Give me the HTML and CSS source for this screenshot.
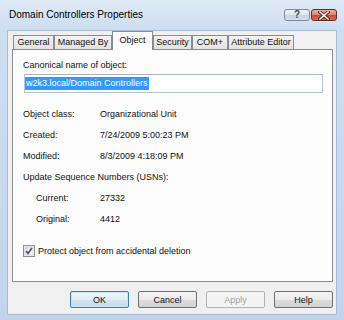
FILE: index.html
```html
<!DOCTYPE html>
<html lang="en">
<head>
  <meta charset="UTF-8">
  <title>Domain Controllers Properties</title>
  <link rel="stylesheet" href="styles.css">
</head>
<body>
  <div class="window">
    <div class="titlebar">
      <span class="title">Domain Controllers Properties</span>
      <div class="caption-btns">
        <span class="cbtn help">?</span>
        <span class="cbtn close">
          <svg width="12" height="9" viewBox="0 0 12 9">
            <path d="M2 1 L10 8 M10 1 L2 8" stroke="#4a1a10" stroke-width="3.2" stroke-linecap="square"/>
            <path d="M2 1 L10 8 M10 1 L2 8" stroke="#fff" stroke-width="1.6" stroke-linecap="square"/>
          </svg>
        </span>
      </div>
    </div>

    <div class="dialog">
      <div class="tabs">
        <div class="tab" style="width:41px">General</div>
        <div class="tab" style="width:58px">Managed By</div>
        <div class="tab selected" style="width:41px">Object</div>
        <div class="tab" style="width:39px">Security</div>
        <div class="tab" style="width:36px">COM+</div>
        <div class="tab" style="width:66px">Attribute Editor</div>
      </div>

      <div class="panel">
        <div class="label">Canonical name of object:</div>
        <div class="textbox"><span class="sel">w2k3.local/Domain Controllers</span></div>

        <div class="rows">
          <div class="row"><span class="key">Object class:</span><span>Organizational Unit</span></div>
          <div class="row"><span class="key">Created:</span><span>7/24/2009 5:00:23 PM</span></div>
          <div class="row"><span class="key">Modified:</span><span>8/3/2009 4:18:09 PM</span></div>
          <div class="row">Update Sequence Numbers (USNs):</div>
          <div class="row sub"><span class="key">Current:</span><span>27332</span></div>
          <div class="row sub"><span class="key">Original:</span><span>4412</span></div>
        </div>

        <div class="check">
          <svg width="12" height="12" viewBox="0 0 12 12">
            <defs>
              <linearGradient id="cb" x1="0" y1="0" x2="1" y2="1">
                <stop offset="0" stop-color="#d6dde8"/>
                <stop offset="1" stop-color="#fbfbfb"/>
              </linearGradient>
            </defs>
            <rect x="0.5" y="0.5" width="11" height="11" fill="#f4f4f4" stroke="#8e8f8f"/>
            <rect x="2" y="2" width="8" height="8" fill="url(#cb)" stroke="#c5c8ce" stroke-width="0.6"/>
            <path d="M3 6 L5 8.5 L9 3" fill="none" stroke="#3e5583" stroke-width="1.6"/>
          </svg>
          <span>Protect object from accidental deletion</span>
        </div>
      </div>

      <div class="buttons">
        <span class="btn default">OK</span>
        <span class="btn">Cancel</span>
        <span class="btn disabled">Apply</span>
        <span class="btn">Help</span>
      </div>
    </div>
  </div>
</body>
</html>
```

FILE: styles.css
```css
html, body {
  margin: 0;
  padding: 0;
}
body {
  font-family: "Liberation Sans", Arial, sans-serif;
  font-size: 9px;
  color: #111;
}
.window {
  width: 344px;
  height: 320px;
  box-sizing: border-box;
  padding: 0 7px 5px 7px;
  background: linear-gradient(to bottom, #dfe9f6 0px, #cddef1 30px, #c0d4ec 100%);
  display: flex;
  flex-direction: column;
}
.titlebar {
  height: 30px;
  display: flex;
  justify-content: space-between;
  align-items: flex-start;
}
.title {
  font-size: 10px;
  line-height: 12px;
  margin: 9px 0 0 2px;
  color: #000;
}
.caption-btns {
  display: flex;
  gap: 1px;
  margin-top: 9px;
}
.cbtn {
  width: 26px;
  height: 12px;
  box-sizing: border-box;
  border: 1px solid #7a889c;
  border-radius: 3px;
  display: flex;
  align-items: center;
  justify-content: center;
}
.help {
  background: linear-gradient(to bottom, #eef3fa 0%, #d9e3ef 50%, #c4d3e6 51%, #d3e0ef 100%);
  color: #3a4452;
  font-size: 10px;
  font-weight: bold;
  line-height: 10px;
}
.close {
  border-color: #6a2a22;
  background: linear-gradient(to bottom, #eaafa1 0%, #d9826e 50%, #c54a32 51%, #d66e54 100%);
}
.dialog {
  flex: 1;
  background: #f0f0f0;
  border: 1px solid #a8bcd5;
  display: flex;
  flex-direction: column;
  padding: 0 3px 0 4px;
}
.tabs {
  display: flex;
  align-items: flex-end;
  height: 19px;
  margin: 0 0 -1px 1px;
}
.tab {
  box-sizing: border-box;
  height: 14px;
  margin-bottom: 1px;
  border: 1px solid #898c95;
  border-bottom: none;
  background: linear-gradient(to bottom, #f3f3f3, #e3e3e3);
  text-align: center;
  line-height: 13px;
  white-space: nowrap;
}
.tab.selected {
  height: 19px;
  margin-bottom: 0;
  background: #fcfcfc;
  line-height: 14px;
  padding-top: 1px;
  position: relative;
  z-index: 1;
}
.panel {
  height: 233px;
  box-sizing: border-box;
  border: 1px solid #898c95;
  background: #fcfcfc;
  padding: 0 9px 0 10px;
}
.label {
  line-height: 14px;
  margin-top: 8px;
}
.textbox {
  margin: 2px 0 0 1px;
  height: 19px;
  box-sizing: border-box;
  border: 1px solid #b6c4d6;
  border-top-color: #a5b3c5;
  background: #fff;
  display: flex;
  align-items: center;
}
.sel {
  background: #3399ff;
  color: #fff;
  line-height: 13px;
  padding: 0 1px 0 1px;
}
.rows {
  margin-top: 11px;
}
.row {
  height: 21px;
  line-height: 21px;
  display: flex;
  white-space: nowrap;
}
.key {
  width: 77px;
}
.row.sub {
  padding-left: 13px;
}
.row.sub .key {
  width: 64px;
}
.check {
  display: flex;
  align-items: center;
  gap: 3px;
  margin-top: 15px;
}
.buttons {
  display: flex;
  justify-content: flex-end;
  gap: 9px;
  margin-top: 9px;
}
.btn {
  width: 59px;
  height: 17px;
  box-sizing: border-box;
  border: 1px solid #707070;
  border-radius: 2px;
  background: linear-gradient(to bottom, #f4f4f4 0%, #ebebeb 50%, #dddddd 51%, #d2d2d2 100%);
  display: flex;
  align-items: center;
  justify-content: center;
}
.btn.default {
  border-color: #3c7fb1;
  box-shadow: inset 0 0 0 1px #c6e6f8;
  background: linear-gradient(to bottom, #f0f6fa 0%, #e2edf5 50%, #d3e3ef 51%, #c9dcea 100%);
}
.btn.disabled {
  border-color: #adb2b5;
  background: #f4f4f4;
  color: #a0a0a0;
}
```
